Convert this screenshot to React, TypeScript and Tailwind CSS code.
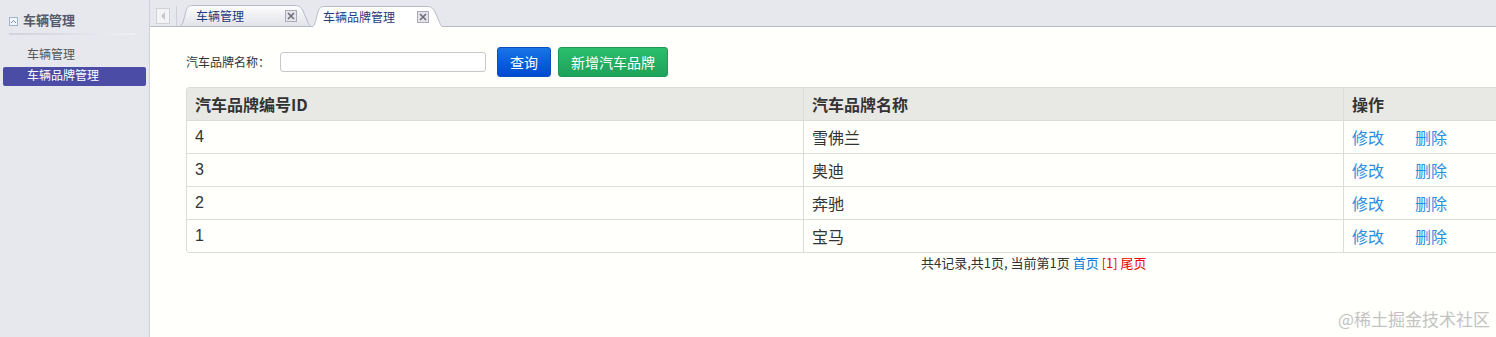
import React from "react";

const rows = [
  { id: "4", name: "雪佛兰" },
  { id: "3", name: "奥迪" },
  { id: "2", name: "奔驰" },
  { id: "1", name: "宝马" },
];

const CJK = { fontFamily: '"Noto Sans CJK SC", sans-serif' };

function CloseBox() {
  return (
    <span className="flex h-[12px] w-[12px] items-center justify-center border border-[#a9a9b8] bg-[#e4e4ea]">
      <svg width="8" height="8" viewBox="0 0 8 8">
        <path d="M1 1 L7 7 M7 1 L1 7" stroke="#6d6d7a" strokeWidth="1.6" />
      </svg>
    </span>
  );
}

function Tab({ label, active, pl }: { label: string; active?: boolean; pl: number }) {
  return (
    <div className="relative h-[21px] w-[132px]">
      <svg className="absolute inset-0" width="132" height="21" viewBox="0 0 132 21">
        <defs>
          <linearGradient id="tabg" x1="0" y1="0" x2="0" y2="1">
            <stop offset="0" stopColor="#fdfdfe" />
            <stop offset="1" stopColor="#e2e3e9" />
          </linearGradient>
        </defs>
        <path
          d="M0.5 21 C4 21 5 13 7 6 C8.5 1.5 10 0.5 14 0.5 L116 0.5 C120 0.5 122 2 124 6 L128 15 C129.5 19 130.5 21 132 21"
          fill={active ? "#ffffff" : "url(#tabg)"}
          stroke="#b9bac8"
          strokeWidth="1"
        />
      </svg>
      <div className="relative flex h-full items-center justify-between pr-[14px]" style={{ paddingLeft: pl }}>
        <span className="text-[12px] leading-[16px] text-[#1f3a7a]" style={CJK}>{label}</span>
        <CloseBox />
      </div>
    </div>
  );
}

export default function App() {
  return (
    <div
      className="flex h-[337px] w-[1496px] overflow-hidden bg-[#fffffb] text-[#333]"
      style={{ fontFamily: '"Liberation Sans", "Noto Sans CJK SC", sans-serif' }}
    >
      {/* Sidebar */}
      <div className="flex w-[150px] shrink-0 flex-col border-r border-[#cfd0d8] bg-[#e7e8ee]">
        <div className="flex items-center gap-[5px] pl-[9px] pt-[12px]">
          <span className="flex h-[9px] w-[9px] items-center justify-center border border-[#9fb3cc] bg-[#f3f6fa]">
            <svg width="7" height="5" viewBox="0 0 7 5">
              <path d="M1 4 L3.5 1.5 L6 4" stroke="#7d8fa8" fill="none" strokeWidth="1" />
            </svg>
          </span>
          <span className="text-[13px] font-bold leading-[18px] text-[#555a6a]">车辆管理</span>
        </div>
        <div className="mx-[9px] mt-[3px] h-[2px] w-[126px] bg-gradient-to-r from-[#d0d2dc] to-[#eef0f4]" />
        <div className="mt-[12px] pl-[27px] text-[12px] leading-[17px] text-[#555]">车辆管理</div>
        <div className="mx-[3px] mt-[3px] h-[19px] rounded-[2px] bg-[#4b4ca6] pl-[24px] text-[12px] leading-[19px] text-white">
          车辆品牌管理
        </div>
      </div>

      {/* Main */}
      <div className="flex min-w-0 flex-1 flex-col">
        {/* Tab bar */}
        <div className="flex h-[27px] items-end border-b border-[#b9bac8] bg-[#e7e8ee] pl-[6px]">
          <div className="mb-[2px] mr-[6px] flex h-[16px] w-[14px] items-center justify-center border border-[#cfd0d8] bg-[#f4f4f6]">
            <svg width="6" height="8" viewBox="0 0 6 8">
              <path d="M5 0 L1 4 L5 8 Z" fill="#c7c8ce" />
            </svg>
          </div>
          <div className="h-[20px] w-px bg-[#cfd0d8]" />
          <div className="ml-[2px] flex items-end">
            <Tab label="车辆管理" pl={17} />
          </div>
          <div className="mb-[-1px] flex items-end">
            <Tab label="车辆品牌管理" active pl={12} />
          </div>
        </div>

        {/* Content */}
        <div className="flex-1 bg-[#fffffb] pl-[36px] pt-[20px]">
          <div className="flex h-[30px] items-center">
            <span className="text-[12px] text-[#333]" style={CJK}>汽车品牌名称：</span>
            <input className="ml-[10px] h-[20px] w-[206px] rounded-[3px] border border-[#c8c8c8] bg-white" />
            <button className="ml-[11px] h-[30px] w-[54px] rounded-[3px] border border-[#0a4fbf] bg-gradient-to-b from-[#1a74e6] to-[#0049d1] text-[14px] text-white" style={CJK}>
              查询
            </button>
            <button className="ml-[7px] h-[30px] w-[110px] rounded-[3px] border border-[#1d9a55] bg-gradient-to-b from-[#2bbd6c] to-[#1ea25a] text-[14px] text-white" style={CJK}>
              新增汽车品牌
            </button>
          </div>

          <div className="mt-[10px] w-[1330px] overflow-hidden rounded-[3px] border border-[#dcdcdc]">
            <div className="grid h-[32px] grid-cols-[616px_540px_1fr] bg-[#e8e8e4] text-[16px] font-bold text-[#333]" style={CJK}>
              <div className="flex items-center pl-[8px]">汽车品牌编号ID</div>
              <div className="flex items-center border-l border-[#dcdcdc] pl-[8px]">汽车品牌名称</div>
              <div className="flex items-center border-l border-[#dcdcdc] pl-[8px]">操作</div>
            </div>
            {rows.map((r) => (
              <div
                key={r.id}
                className="grid h-[33px] grid-cols-[616px_540px_1fr] border-t border-[#dcdcdc] text-[16px] text-[#333]"
                style={CJK}
              >
                <div className="flex items-center pl-[8px]" style={{ fontFamily: '"Liberation Sans", sans-serif' }}>{r.id}</div>
                <div className="flex items-center border-l border-[#dcdcdc] pl-[8px]">{r.name}</div>
                <div className="flex items-center border-l border-[#dcdcdc] pl-[8px] text-[#2b8ee0]">
                  <span>修改</span>
                  <span className="ml-[31px]">删除</span>
                </div>
              </div>
            ))}
          </div>

          <div className="mt-[1px] w-[1700px] pl-[735px] text-[13px] leading-[18px] text-[#333]" style={CJK}>
            共4记录,共1页, 当前第1页 <span className="text-[#0a7ad6]">首页</span> <span className="text-[#e00]">[1]</span> <span className="text-[#e00]">尾页</span>
          </div>

          <div className="flex justify-end pr-[6px] pt-[36px] text-[17px] leading-[22px] text-[#c3c3c3]" style={CJK}>
            @稀土掘金技术社区
          </div>
        </div>
      </div>
    </div>
  );
}
